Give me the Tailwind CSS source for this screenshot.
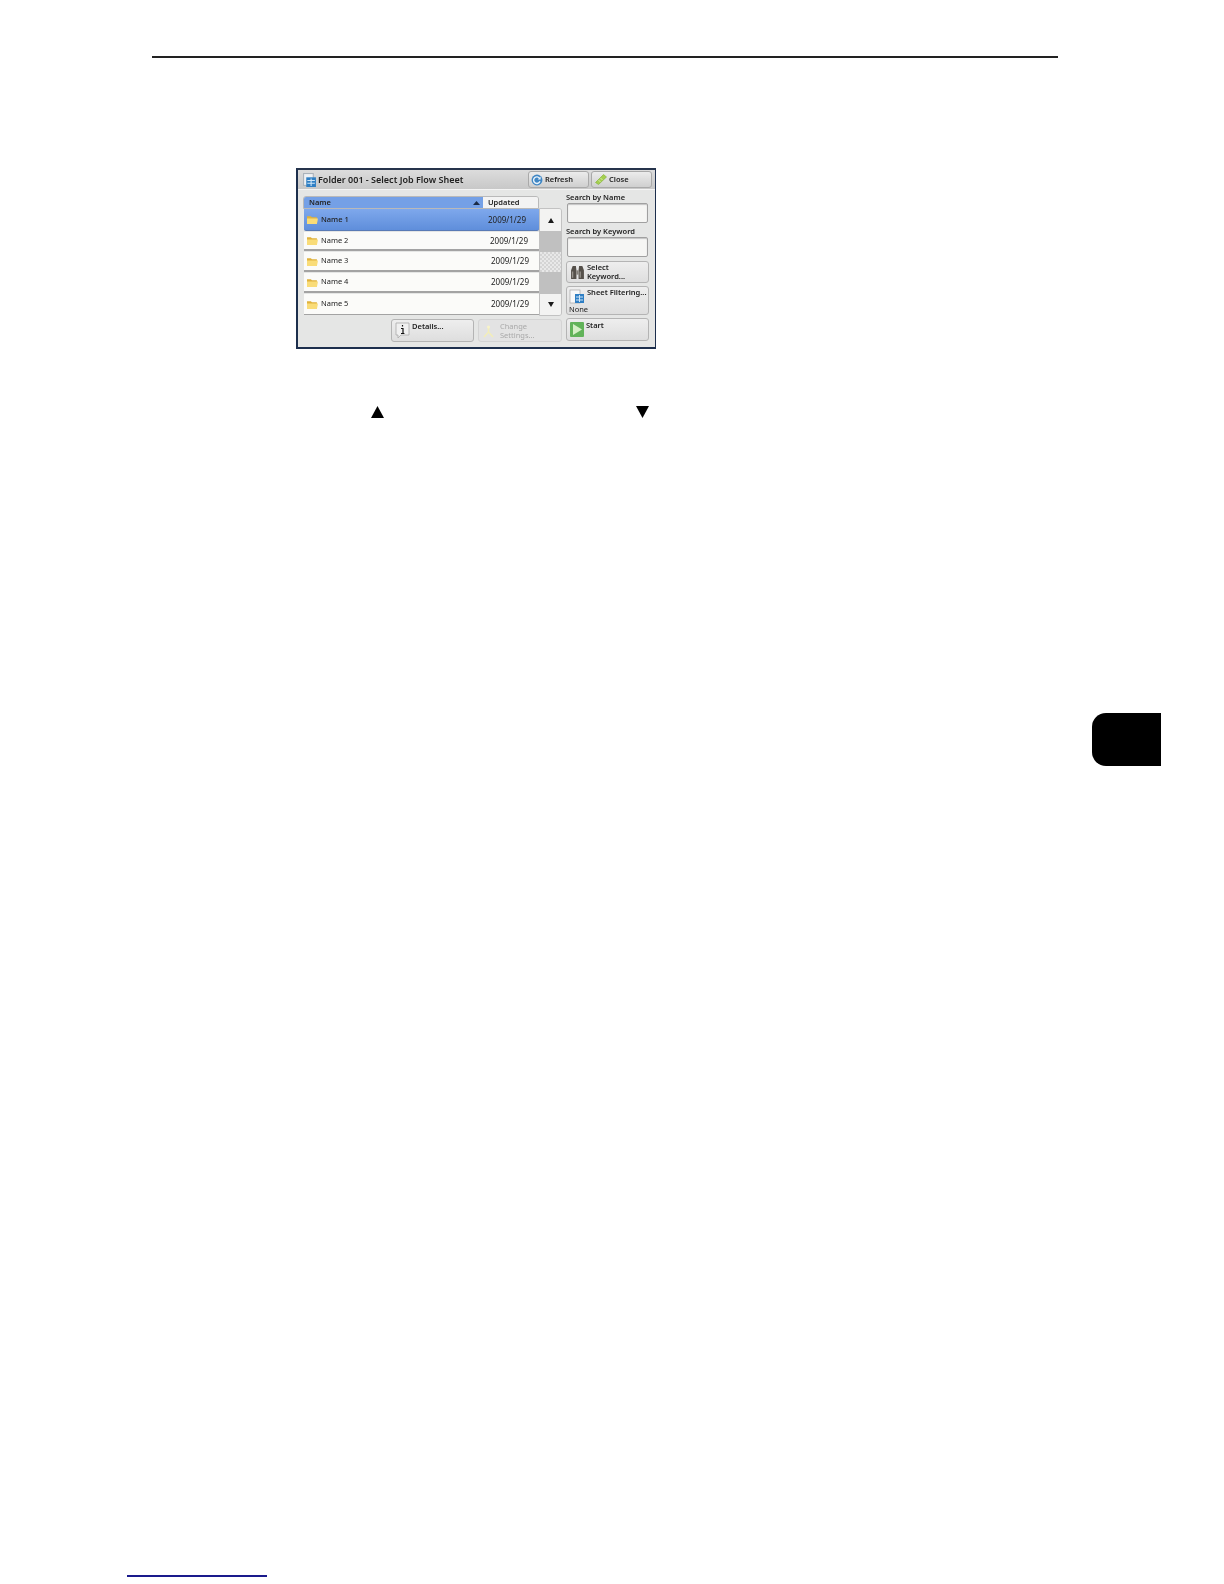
<!DOCTYPE html>
<html lang="en">
<head>
<meta charset="UTF-8">
<title>Select Job Flow Sheet</title>
<script src="https://cdn.jsdelivr.net/npm/@tailwindcss/browser@4"></script>
</head>
<body class="bg-white font-['Noto_Sans',sans-serif] text-[#222]">
<div class="w-[1224px] h-[1584px] flex flex-col overflow-hidden">
  <div class="mt-[56px] ml-[152px] w-[906px] h-[2px] bg-[#222] shrink-0"></div>

  <!-- panel -->
  <div class="mt-[110px] ml-[296px] w-[360px] h-[181px] shrink-0 border-2 border-r border-[#1d2f4d] border-t-[#26344c] bg-[#e5e6e5] flex flex-col blur-[0.3px]">
    <!-- title bar -->
    <div class="h-[20px] shrink-0 flex items-center bg-gradient-to-b from-[#dcdcdc] to-[#c8c8c8] border-b border-[#f4f4f4] pl-[5px] pr-[3px]">
      <svg class="w-[13px] h-[14px] shrink-0" viewBox="0 0 12 13"><rect x="0.5" y="0.5" width="9" height="11" fill="#eef1f4" stroke="#aab2ba"/><rect x="3" y="4" width="9" height="9" fill="#2f7fc4"/><path d="M4 7h7M4 9.5h7M7.5 5v7" stroke="#cfe6f8" stroke-width="1"/></svg>
      <span class="ml-[2px] text-[9px] leading-none font-semibold whitespace-nowrap">Folder 001 - Select Job Flow Sheet</span>
      <div class="ml-auto flex gap-[2px]">
        <div class="w-[61px] h-[17px] rounded-[3px] border border-[#a9a9a9] bg-gradient-to-b from-[#ececec] to-[#cfcfcf] flex items-center pl-[2px] gap-[2px]">
          <svg class="w-[12px] h-[12px] shrink-0" viewBox="0 0 11 11"><circle cx="5.5" cy="5.5" r="5" fill="#3f86c4"/><path d="M8 4.2A3 3 0 1 0 8.2 6.6" fill="none" stroke="#e8f2fa" stroke-width="1.3"/><path d="M8.8 2.4v2.6H6.2z" fill="#e8f2fa"/></svg>
          <span class="text-[7.5px] leading-none font-semibold">Refresh</span>
        </div>
        <div class="w-[61px] h-[17px] rounded-[3px] border border-[#a9a9a9] bg-gradient-to-b from-[#ececec] to-[#cfcfcf] flex items-center pl-[3px] gap-[2px]">
          <svg class="w-[12px] h-[11px] shrink-0" viewBox="0 0 12 11"><path d="M0.5 8.5 8.5 0.5 11.5 3 3.5 10.5z" fill="#a4cf4e" stroke="#7fae36" stroke-width="0.6"/><path d="M3.5 6l2 2M5.5 4l2 2" stroke="#e2f2b8" stroke-width="0.8"/></svg>
          <span class="text-[7.5px] leading-none font-semibold">Close</span>
        </div>
      </div>
    </div>

    <!-- body -->
    <div class="flex-1 flex pl-[5px] pt-[6px]">
      <div class="w-[259px] shrink-0 flex flex-col">
        <div class="flex">
          <div class="w-[236px] shrink-0">
            <div class="h-[13px] flex rounded-t-[3px] border border-[#b9b9b9] overflow-hidden">
              <div class="w-[179px] shrink-0 bg-[#74a0e6] flex items-center pl-[5px] text-[7.5px] leading-none font-semibold">
                <span>Name</span>
                <svg class="ml-auto mr-[3px] w-[7px] h-[4px]" viewBox="0 0 7 4"><path d="M3.5 0 7 4H0z" fill="#1a2a44"/></svg>
              </div>
              <div class="flex-1 bg-[#f3f3f3] flex items-center pl-[5px] text-[7.5px] leading-none font-semibold">Updated</div>
            </div>
            <div class="pl-[1px] flex flex-col">
              <div class="h-[22px] flex items-center bg-gradient-to-b from-[#7ea8ec] to-[#5f8edb] border-b border-[#5a7bb5] rounded-b-[2px] pl-[3px] pr-[13px] text-[8px]">
                <svg class="w-[11px] h-[9px] shrink-0" viewBox="0 0 10 8"><path d="M0 1h3.5l1 1H9v6H0z" fill="#e0b23c"/><path d="M0 3h10l-1 5H0z" fill="#f9dc78"/></svg>
                <span class="ml-[3px] text-[7.5px] font-medium">Name 1</span><span class="ml-auto">2009/1/29</span>
              </div>
              <div class="mt-[1px] h-[19px] flex items-center bg-[#fbfbf9] border-b-2 border-[#a3a3a3] pl-[3px] pr-[11px] text-[8px]">
                <svg class="w-[11px] h-[9px] shrink-0" viewBox="0 0 10 8"><path d="M0 1h3.5l1 1H9v6H0z" fill="#e0b23c"/><path d="M0 3h10l-1 5H0z" fill="#f9dc78"/></svg>
                <span class="ml-[3px] text-[7.5px]">Name 2</span><span class="ml-auto">2009/1/29</span>
              </div>
              <div class="mt-[1px] h-[20px] flex items-center bg-[#fbfbf9] border-b-2 border-[#a3a3a3] pl-[3px] pr-[10px] text-[8px]">
                <svg class="w-[11px] h-[9px] shrink-0" viewBox="0 0 10 8"><path d="M0 1h3.5l1 1H9v6H0z" fill="#e0b23c"/><path d="M0 3h10l-1 5H0z" fill="#f9dc78"/></svg>
                <span class="ml-[3px] text-[7.5px]">Name 3</span><span class="ml-auto">2009/1/29</span>
              </div>
              <div class="mt-[1px] h-[20px] flex items-center bg-[#fbfbf9] border-b-2 border-[#a3a3a3] pl-[3px] pr-[10px] text-[8px]">
                <svg class="w-[11px] h-[9px] shrink-0" viewBox="0 0 10 8"><path d="M0 1h3.5l1 1H9v6H0z" fill="#e0b23c"/><path d="M0 3h10l-1 5H0z" fill="#f9dc78"/></svg>
                <span class="ml-[3px] text-[7.5px]">Name 4</span><span class="ml-auto">2009/1/29</span>
              </div>
              <div class="mt-[1px] h-[21px] flex items-center bg-[#fbfbf9] border-b border-[#a3a3a3] pl-[3px] pr-[10px] text-[8px]">
                <svg class="w-[11px] h-[9px] shrink-0" viewBox="0 0 10 8"><path d="M0 1h3.5l1 1H9v6H0z" fill="#e0b23c"/><path d="M0 3h10l-1 5H0z" fill="#f9dc78"/></svg>
                <span class="ml-[3px] text-[7.5px]">Name 5</span><span class="ml-auto">2009/1/29</span>
              </div>
            </div>
          </div>
          <!-- scroll -->
          <div class="w-[23px] shrink-0 mt-[12px] h-[108px] flex flex-col border border-[#c2c2c2] rounded-r-[3px] overflow-hidden">
            <div class="h-[22px] bg-[#f3f3f2] flex items-center justify-center"><svg class="w-[6px] h-[5px]" viewBox="0 0 6 5"><path d="M3 0 6 5H0z" fill="#1b1b1b"/></svg></div>
            <div class="h-[21px] bg-[#c0c0c0]"></div>
            <div class="h-[20px] bg-[repeating-conic-gradient(#d4d4d4_0_25%,#e8e8e8_0_50%)] bg-[length:4px_4px]"></div>
            <div class="h-[22px] bg-[#c0c0c0]"></div>
            <div class="flex-1 bg-[#f3f3f2] flex items-center justify-center"><svg class="w-[6px] h-[5px]" viewBox="0 0 6 5"><path d="M0 0H6L3 5z" fill="#1b1b1b"/></svg></div>
          </div>
        </div>
        <!-- bottom buttons -->
        <div class="mt-[3px] pl-[88px] flex gap-[4px]">
          <div class="w-[83px] h-[23px] rounded-[3px] border border-[#b4b4b4] bg-gradient-to-b from-[#eeeeee] to-[#dedede] flex pl-[3px] pt-[2px] gap-[2px]">
            <svg class="w-[15px] h-[17px] shrink-0" viewBox="0 0 15 17"><path d="M1 1h13v12H6l-3 3v-3H1z" fill="#f0f0f0" stroke="#aaa" stroke-width="0.8"/><path d="M7.5 3v1.5M6 6.5h2v5M6 11.5h3.4" stroke="#111" stroke-width="1.2" fill="none"/></svg>
            <span class="text-[7.5px] leading-[9px] font-semibold">Details...</span>
          </div>
          <div class="w-[84px] h-[23px] rounded-[3px] border border-[#d4d4d4] bg-[#e3e3e3] flex pl-[3px] pt-[2px] gap-[5px]">
            <svg class="w-[13px] h-[16px] mt-[2px] shrink-0" viewBox="0 0 13 16"><path d="M2 13 6.5 8 11 13M6.5 8V3" stroke="#f3eeb8" stroke-width="1.5" fill="none"/><circle cx="6.5" cy="3" r="1.6" fill="#f7f3c9"/></svg>
            <span class="text-[7.5px] leading-[9px] text-[#a9a9a9]">Change<br>Settings...</span>
          </div>
        </div>
      </div>

      <!-- right column -->
      <div class="ml-[4px] w-[83px] shrink-0 flex flex-col">
        <div class="-mt-[3px] h-[8px] text-[7.5px] leading-[8px] font-semibold whitespace-nowrap">Search by Name</div>
        <div class="mt-[2px] ml-[1px] w-[81px] h-[20px] bg-[#f6f6f4] border border-[#a0a0a0] rounded-[2px] shadow-[inset_0_1px_1px_#c4c4c4]"></div>
        <div class="mt-[4px] h-[9px] text-[7.5px] leading-[9px] font-semibold whitespace-nowrap">Search by Keyword</div>
        <div class="mt-[1px] ml-[1px] w-[81px] h-[20px] bg-[#f6f6f4] border border-[#a0a0a0] rounded-[2px] shadow-[inset_0_1px_1px_#c4c4c4]"></div>
        <div class="mt-[4px] h-[22px] rounded-[3px] border border-[#b4b4b4] bg-gradient-to-b from-[#eeeeee] to-[#dedede] flex pl-[3px] pt-[1px] gap-[2px]">
          <svg class="w-[15px] h-[15px] mt-[2px] shrink-0" viewBox="0 0 14 14"><path d="M1 5 2.5 1h3L6 5v8H1zM8 5l.5-4h3L13 5v8H8z" fill="#55504a"/><path d="M6 5h2v4H6z" fill="#86817a"/><path d="M2.5 6v6M9.5 6v6" stroke="#a5a09a"/></svg>
          <span class="text-[7.5px] leading-[9px] font-semibold whitespace-nowrap">Select<br>Keyword...</span>
        </div>
        <div class="mt-[3px] h-[29px] rounded-[3px] border border-[#b4b4b4] bg-gradient-to-b from-[#eeeeee] to-[#dedede] pl-[2px] pt-[1px] flex flex-col relative">
          <div class="flex gap-[2px]">
            <svg class="w-[16px] h-[15px] mt-[1px] shrink-0" viewBox="0 0 16 15"><rect x="1" y="1" width="10" height="13" fill="#f7f8f9" stroke="#a5a5a5" stroke-width="0.7"/><rect x="6" y="5" width="9" height="9" fill="#2f7fc4"/><path d="M7 8h7M7 11h7M10.5 6v7" stroke="#cfe6f8"/></svg>
            <span class="text-[7.5px] leading-[9px] font-semibold whitespace-nowrap">Sheet Filtering...</span>
          </div>
          <span class="absolute left-[2px] bottom-[0px] text-[7.5px] leading-[9px]">None</span>
        </div>
        <div class="mt-[3px] h-[23px] rounded-[3px] border border-[#b4b4b4] bg-gradient-to-b from-[#eeeeee] to-[#dedede] flex pl-[3px] pt-[2px] gap-[2px]">
          <svg class="w-[14px] h-[15px] mt-[1px] shrink-0" viewBox="0 0 14 15"><rect width="14" height="15" rx="1" fill="#62b35a"/><path d="M3 2 12 7.5 3 13z" fill="#d5efc6"/></svg>
          <span class="text-[7.5px] leading-[9px] font-semibold">Start</span>
        </div>
      </div>
    </div>
  </div>

  <!-- arrows in the text line -->
  <div class="mt-[57px] ml-[371px] w-[278px] flex justify-between shrink-0">
    <svg class="w-[13px] h-[12px]" viewBox="0 0 13 12"><path d="M6.5 0 13 12H0z" fill="#000"/></svg>
    <svg class="w-[13px] h-[12px]" viewBox="0 0 13 12"><path d="M0 0H13L6.5 12z" fill="#000"/></svg>
  </div>

  <!-- chapter tab -->
  <div class="mt-[295px] ml-[1092px] w-[69px] h-[53px] shrink-0 bg-black rounded-l-[14px]"></div>

  <!-- footer link rule -->
  <div class="mt-[809px] ml-[127px] w-[140px] h-[1.5px] shrink-0 bg-[#1a1a8c]"></div>
</div>
</body>
</html>
